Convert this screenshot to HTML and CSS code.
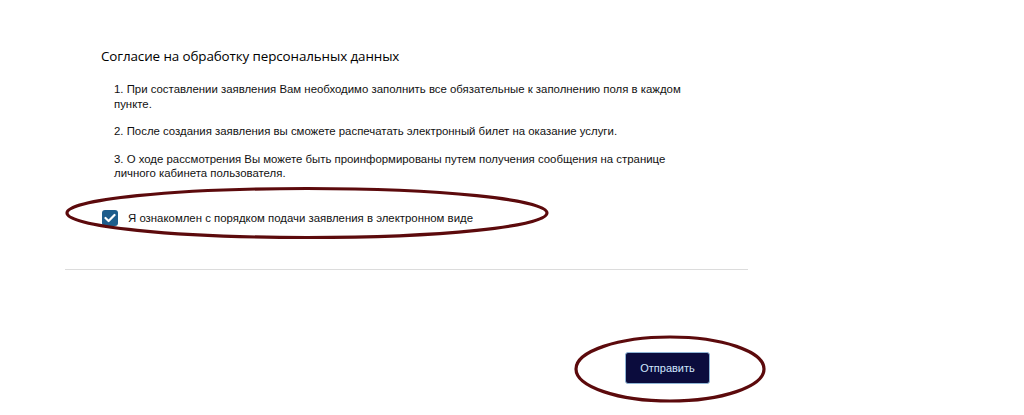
FILE: index.html
```html
<!DOCTYPE html>
<html lang="ru">
<head>
<meta charset="utf-8">
<link rel="stylesheet" href="styles.css">
</head>
<body>
<div class="page">
  <section class="consent">
    <h2 class="title">Согласие на обработку персональных данных</h2>
    <ol class="rules">
      <li>1. При составлении заявления Вам необходимо заполнить все обязательные к заполнению поля в каждом пункте.</li>
      <li>2. После создания заявления вы сможете распечатать электронный билет на оказание услуги.</li>
      <li>3. О ходе рассмотрения Вы можете быть проинформированы путем получения сообщения на странице личного кабинета пользователя.</li>
    </ol>
    <label class="agree">
      <span class="box">
        <svg width="12" height="10" viewBox="0 0 12 10"><path d="M1.5 5 L4.6 8 L10.5 2" fill="none" stroke="#fff" stroke-width="2.2" stroke-linecap="round" stroke-linejoin="round"/></svg>
      </span>
      <span class="agree-text">Я ознакомлен с порядком подачи заявления в электронном виде</span>
      <svg class="mark mark-agree" width="486" height="56" viewBox="0 0 486 56"><ellipse cx="243" cy="28" rx="240" ry="24.5" fill="none" stroke="#5c0a0c" stroke-width="3.2"/></svg>
    </label>
  </section>
  <div class="actions">
    <div class="btn-wrap">
      <button class="submit">Отправить</button>
      <svg class="mark mark-btn" width="192" height="68" viewBox="0 0 192 68"><ellipse cx="96" cy="34" rx="94" ry="32" fill="none" stroke="#5c0a0c" stroke-width="3.2"/></svg>
    </div>
  </div>
</div>
</body>
</html>
```
FILE: styles.css
```css
* { box-sizing: border-box; }
html, body { margin: 0; padding: 0; background: #fff; }
body { font-family: "Liberation Sans", Arial, sans-serif; color: #111; }
.page { width: 1024px; height: 415px; overflow: hidden; }
.consent {
  margin-left: 65px;
  width: 683px;
  padding: 47px 0 0 36px;
  border-bottom: 1px solid #dcdcdc;
  height: 270px;
}
.title {
  margin: 0;
  font-family: "Open Sans", "Noto Sans", sans-serif;
  font-weight: 500;
  font-size: 13.4px;
  line-height: 18px;
  color: #000;
  letter-spacing: -0.1px;
}
.rules {
  list-style: none;
  margin: 17px 0 0 0;
  padding: 0 0 0 13px;
  width: 588px;
}
.rules li {
  font-size: 11.4px;
  line-height: 14.5px;
  margin-bottom: 13px;
}
.agree {
  position: relative;
  display: flex;
  align-items: center;
  gap: 10px;
  margin-top: 29px;
  padding-left: 1px;
  font-size: 11.4px;
}
.box {
  width: 16px; height: 16px;
  border-radius: 3px;
  background: #1e5d8c;
  display: flex; align-items: center; justify-content: center;
}
.mark { position: absolute; pointer-events: none; }
.mark-agree { left: -37px; top: -25px; }
.actions {
  display: flex;
  justify-content: flex-start;
  padding: 82px 0 0 625px;
}
.btn-wrap { position: relative; }
.submit {
  width: 85px; height: 32px;
  background: #0b0c3d;
  color: #cfe6ff;
  border: 1px solid #8fb6d6;
  border-radius: 3px;
  font-family: "Liberation Sans", Arial, sans-serif;
  font-size: 11px;
  padding: 0;
  display: block;
}
.mark-btn { left: -51px; top: -17px; }
```
